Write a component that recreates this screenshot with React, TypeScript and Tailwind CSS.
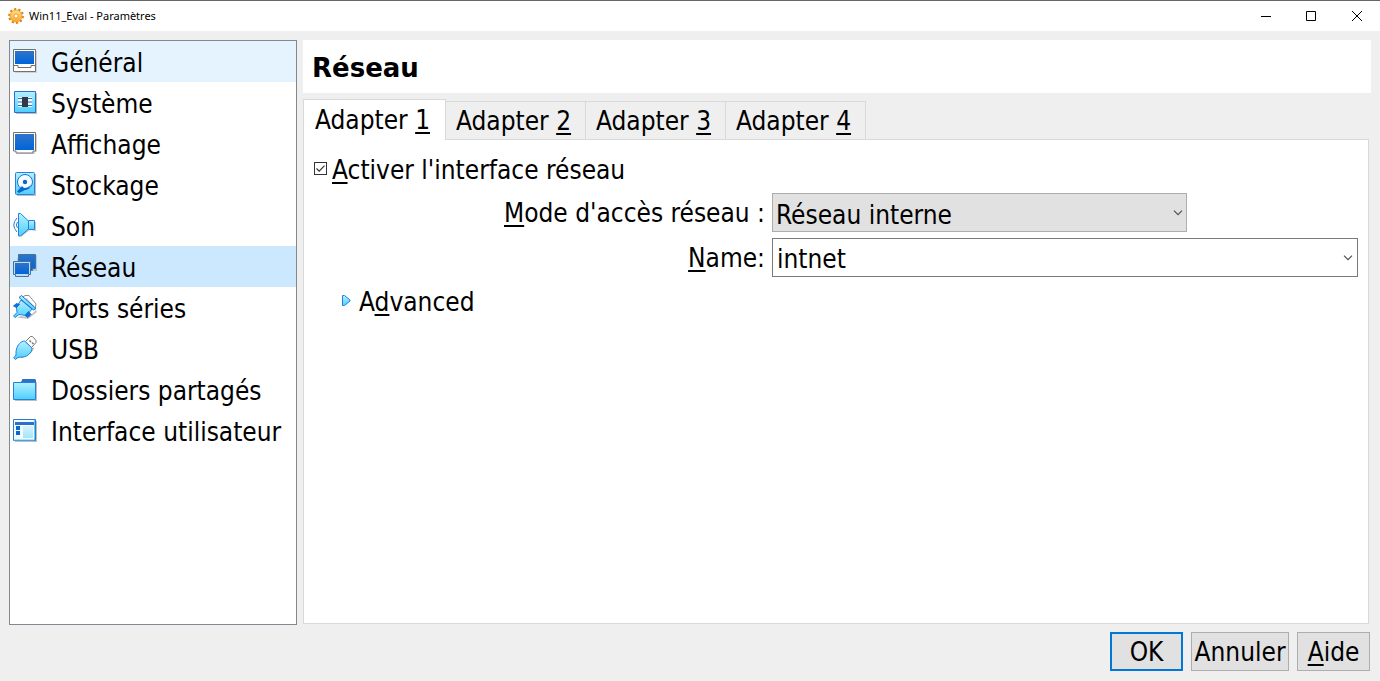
import { useState, type ReactNode } from "react";

function MonitorIcon({ tray }: { tray?: boolean }) {
  return (
    <>
      {tray ? (
        <>
          <path d="M2 2h22v22H2z" fill="#c9c9c9" opacity="0.8" />
          <path d="M.5 .5h22v22H.5z" fill="#fff" stroke="#77716e" />
          <path d="M1 16.500h4v2h13v-2h4" fill="none" stroke="#77716e" />
          <path d="M2 2h19v13H2z" fill="url(#screen)" />
        </>
      ) : (
        <>
          <path d="M2 2h22v18h-2v2H4z" fill="#c9c9c9" opacity="0.8" />
          <path d="M.5 .5h22v18.500h-2.500v2H3v-2H.5z" fill="#fff" stroke="#77716e" />
          <path d="M2 2h19v16H2z" fill="url(#screen)" />
        </>
      )}
    </>
  );
}

const icons: Record<string, ReactNode> = {
  general: <MonitorIcon tray />,
  system: (
    <>
      <path d="M3 3h21v21H3z" fill="#bdbdbd" />
      <path d="M1.500 1.500h21v21h-21z" fill="url(#aqua)" stroke="#2b6fcb" />
      <path d="M5 7h14v10H5z" fill="#f3fbff" />
      <path d="M5 8.500h14M5 12h14M5 15.500h14" stroke="#2b6fcb" strokeWidth="1.200" />
      <path d="M9 7h6v10H9z" fill="#333942" />
    </>
  ),
  display: (
    <g transform="translate(0 1)">
      <MonitorIcon />
    </g>
  ),
  storage: (
    <>
      <path d="M4 2h19v22H4z" fill="#bdbdbd" />
      <rect x="2.500" y=".5" width="19" height="22" rx="1" fill="url(#aqua)" stroke="#2b7fe0" />
      <circle cx="12" cy="10" r="7.500" fill="#f4fcff" stroke="#1673d8" />
      <circle cx="12" cy="10" r="2.200" fill="#0b66ce" />
      <path d="M18 12c-1 3.500-3 5-6 6l-6 3-2-1.500 5-5.500 2 2c3 0 5-1 7-4z" fill="#0b66ce" />
    </>
  ),
  sound: (
    <>
      <path d="M6 2l10 7h7v9l-6-1-9 7z" fill="#c5c5c5" />
      <path d="M15.500 7.500h6v9h-6z" fill="url(#aqua)" stroke="#2380df" />
      <path d="M5.500 .5h2l8 7.500v8l-8 7h-2z" fill="url(#aqua)" stroke="#2380df" />
      <path d="M4 5Q-2.500 12 4 19M4.500 9Q2 12 4.500 15" fill="none" stroke="#2380df" />
    </>
  ),
  network: (
    <>
      <path d="M6 1h18v16H9v2H4V4h2z" fill="#8aa9c4" opacity="0.5" />
      <path d="M5.500 .5h17v14h-3v2h-11v-2h-3z" fill="url(#screen)" stroke="#4a7296" />
      <path d="M.5 7.500h17v13h-2v2h-13v-2h-2z" fill="#bcdcf4" stroke="#4a7296" />
      <path d="M2 9h14v11H2z" fill="url(#screen)" />
    </>
  ),
  serial: (
    <>
      <path d="M4 23l4-2 7 1 4-3 4-4 1 2-9 7-7-1z" fill="#c2c2c2" />
      <path d="M10 2l2-1.500h4l7 8.500-1 5z" fill="#fff" stroke="#8f8f8f" />
      <path d="M13 3.500l7.500 8" stroke="#c4c4c4" strokeWidth="1.200" />
      <path d="M3.500 12L8 5l11 9-5.500 6.500-7.500-1-4 3-1.500-1.500L4 17.500z" fill="url(#aqua)" stroke="#2380df" />
      <path d="M6 2.500L8.500 .5 23 13.500l-2.500 1.500z" fill="url(#aqua)" stroke="#1670d2" />
      <path d="M.5 11l3-2.500 3 1-3 3zM12 20.500l3.500-4 2.500 3-3 3z" fill="#0b74dc" stroke="#1670d2" />
    </>
  ),
  usb: (
    <>
      <path d="M3 24c2-3 5-1 10-5 5-4 7-8 7-8l1 1c0 3-8 11-15 10z" fill="#c2c2c2" />
      <path d="M12.500 5.500l5-5h2l3.500 4v2l-5 5.500z" fill="#fff" stroke="#777" />
      <path d="M16.500 4.500l1.500 1.500M19 6.500l1.500 1.500" stroke="#777" strokeWidth="1.500" />
      <path d="M11.500 5l7.500 7c0 5-5 8.500-9 9-3 .4-5 0-6 1l-1.500 1.500-1.800-1.800L2.500 20c1-1 0-4 1-7 1-4 4.500-8 8-8z" fill="url(#aqua)" stroke="#2380df" />
    </>
  ),
  folder: (
    <>
      <path d="M2 5h22v19H2z" fill="#bdbdbd" />
      <path d="M8 5l1.500-3H22l1 1v8H8z" fill="#2d6fc9" />
      <path d="M.5 5.500h22v17H.5z" fill="url(#aqua)" stroke="#2380df" />
    </>
  ),
  ui: (
    <>
      <path d="M2 3h22v21H2z" fill="#bdbdbd" />
      <path d="M.5 1.500h22v21H.5z" fill="#f2fbff" stroke="#2b7bd0" />
      <path d="M21.500 2v20H1" fill="none" stroke="#59cdf8" />
      <path d="M2 4h19v3H2z" fill="#2d6fc9" />
      <path d="M3 8h4v4H3zM3 13h4v4H3z" fill="#0b66d4" />
      <path d="M10 8h10v12H10z" fill="url(#pale)" />
    </>
  ),
};

const categories = [
  { id: "general", label: "Général" },
  { id: "system", label: "Système" },
  { id: "display", label: "Affichage" },
  { id: "storage", label: "Stockage" },
  { id: "sound", label: "Son" },
  { id: "network", label: "Réseau" },
  { id: "serial", label: "Ports séries" },
  { id: "usb", label: "USB" },
  { id: "folder", label: "Dossiers partagés" },
  { id: "ui", label: "Interface utilisateur" },
];

function Key({ children }: { children: ReactNode }) {
  return (
    <span className="underline decoration-2 underline-offset-3 [text-decoration-skip-ink:none]">
      {children}
    </span>
  );
}

function Chevron() {
  return (
    <svg viewBox="0 0 10 6" className="h-[6px] w-[10px]" aria-hidden="true">
      <path d="M1 .7l4 4 4-4" fill="none" stroke="#505050" strokeWidth="1.200" />
    </svg>
  );
}

function GearIcon() {
  return (
    <svg viewBox="0 0 16 16" className="size-4" aria-hidden="true">
      <circle cx="8" cy="8" r="6.700" fill="none" stroke="#e07c18" strokeWidth="2.400" strokeDasharray="2.100 2.109" />
      <circle cx="8" cy="8" r="6" fill="url(#gold)" stroke="#ec9a2c" strokeWidth=".8" />
      <circle cx="8" cy="8" r="2" fill="#fffdf5" stroke="#e8912b" strokeWidth=".8" />
    </svg>
  );
}

function Gradients() {
  return (
    <svg className="absolute size-0" aria-hidden="true">
      <defs>
        <linearGradient id="screen" x1="0" y1="0" x2="0" y2="1">
          <stop offset="0" stopColor="#2d75c9" />
          <stop offset="1" stopColor="#0064da" />
        </linearGradient>
        <linearGradient id="aqua" x1="0" y1="0" x2="0" y2="1">
          <stop offset="0" stopColor="#b4f1fd" />
          <stop offset="1" stopColor="#4dcfff" />
        </linearGradient>
        <linearGradient id="pale" x1="0" y1="0" x2="0" y2="1">
          <stop offset="0" stopColor="#d8f4fd" />
          <stop offset="1" stopColor="#a4e3fa" />
        </linearGradient>
        <linearGradient id="gold" x1="0" y1="0" x2="0" y2="1">
          <stop offset="0" stopColor="#ffe07a" />
          <stop offset="1" stopColor="#fba72f" />
        </linearGradient>
      </defs>
    </svg>
  );
}

export default function App() {
  const [category, setCategory] = useState("network");
  const [adapter, setAdapter] = useState(1);
  const [enabled, setEnabled] = useState(true);
  const [network, setNetwork] = useState("intnet");

  return (
    <div className="flex min-h-screen flex-col bg-[#efefef] font-['DejaVu_Sans_Condensed','DejaVu_Sans',sans-serif] text-[26px] leading-[38px] text-black">
      <Gradients />
      <header className="flex h-[31px] items-center justify-between border-t border-[#666] bg-white pl-2">
        <div className="flex items-center gap-[5px]">
          <GearIcon />
          <h1 className="font-['Noto_Sans','Open_Sans',sans-serif] text-[11px] leading-4">Win11_Eval - Paramètres</h1>
        </div>
        <div className="flex">
          <button type="button" aria-label="Réduire" className="grid h-[30px] w-[45px] place-items-center">
            <svg viewBox="0 0 11 11" className="size-[11px]"><path d="M1 5.500h10" stroke="#000" /></svg>
          </button>
          <button type="button" aria-label="Agrandir" className="grid h-[30px] w-[46px] place-items-center">
            <svg viewBox="0 0 10 10" className="size-[10px]"><path d="M.5 .5h9v9h-9z" fill="none" stroke="#000" /></svg>
          </button>
          <button type="button" aria-label="Fermer" className="grid h-[30px] w-[46px] place-items-center">
            <svg viewBox="0 0 10 10" className="size-[10px]"><path d="M0 0l10 10M10 0L0 10" stroke="#000" /></svg>
          </button>
        </div>
      </header>

      <div className="flex grow gap-[6px] px-[9px] pt-[9px]">
        <nav className="w-[288px] shrink-0 border border-[#828790] bg-white">
          {categories.map((item) => (
            <button
              key={item.id}
              type="button"
              onClick={() => setCategory(item.id)}
              aria-current={item.id === category ? "page" : undefined}
              className={`flex h-[41px] w-full items-center gap-[13px] pl-[3px] text-left whitespace-nowrap ${
                item.id === category ? "bg-[#cce8ff]" : item.id === "general" ? "bg-[#e5f3ff]" : "hover:bg-[#e5f3ff]"
              }`}
            >
              <svg viewBox="0 0 25 25" className="size-[25px] shrink-0" aria-hidden="true">
                {icons[item.id]}
              </svg>
              <span className="pt-0.5">{item.label}</span>
            </button>
          ))}
        </nav>

        <main className="flex min-w-0 grow flex-col">
          <h2 className="h-[53px] bg-white px-[9px] font-['DejaVu_Sans',sans-serif] leading-[56px] font-bold">Réseau</h2>

          <div className="mt-[6px] mr-[2px] flex grow flex-col">
            <div role="tablist" className="flex h-[41px] items-end">
              {[1, 2, 3, 4].map((n) => (
                <button
                  key={n}
                  type="button"
                  role="tab"
                  aria-selected={n === adapter}
                  onClick={() => setAdapter(n)}
                  className={
                    n === adapter
                      ? "h-[41px] w-[143px] border border-b-0 border-[#d9d9d9] bg-white pr-1 whitespace-nowrap"
                      : "h-[39px] w-[140px] border-t border-r border-[#d9d9d9] pr-1 whitespace-nowrap"
                  }
                >
                  Adapter <Key>{n}</Key>
                </button>
              ))}
            </div>
            <section role="tabpanel" className="-mt-px flex grow flex-col">
              <div className="flex">
                <div className="w-[143px] border-l border-[#d9d9d9]" />
                <div className="h-px grow bg-[#d9d9d9]" />
              </div>
              <div className="grow border border-t-0 border-[#d9d9d9] bg-white pt-[10px] pr-[10px] pl-[10px]">
                <label className="flex items-center gap-[5px]">
                  <span className="mb-0.5 grid size-[13px] place-items-center">
                    <input
                      type="checkbox"
                      checked={enabled}
                      onChange={(e) => setEnabled(e.target.checked)}
                      className="col-start-1 row-start-1 size-[13px] appearance-none border border-[#333] bg-white"
                    />
                    {enabled && (
                      <svg viewBox="0 0 13 13" className="pointer-events-none col-start-1 row-start-1 size-[13px]" aria-hidden="true">
                        <path d="M2.500 6.500l2.700 2.700 5.300-5.500" fill="none" stroke="#333" strokeWidth="1.200" />
                      </svg>
                    )}
                  </span>
                  <span className="pt-px">
                    <Key>A</Key>ctiver l'interface réseau
                  </span>
                </label>

                <div className="mt-1 grid grid-cols-[451px_minmax(0,1fr)] gap-x-[7px] gap-y-[6px]">
                  <label htmlFor="mode" className="pt-px text-right whitespace-nowrap">
                    <Key>M</Key>ode d'accès réseau :
                  </label>
                  <div className="grid w-[415px] items-center">
                    <select
                      id="mode"
                      className="col-start-1 row-start-1 h-[39px] appearance-none border border-[#adadad] bg-[#e1e1e1] pt-0.5 pr-6 pl-[3px]"
                    >
                      <option>Réseau interne</option>
                    </select>
                    <span className="pointer-events-none col-start-1 row-start-1 mr-1 justify-self-end">
                      <Chevron />
                    </span>
                  </div>

                  <label htmlFor="name" className="pt-px text-right">
                    <Key>N</Key>ame:
                  </label>
                  <div className="flex h-[39px] border border-[#7a7a7a]">
                    <input
                      id="name"
                      type="text"
                      value={network}
                      onChange={(e) => setNetwork(e.target.value)}
                      className="min-w-0 grow pt-0.5 pl-1 outline-none"
                    />
                    <button type="button" aria-label="Afficher la liste" className="grid w-[18px] place-items-center">
                      <Chevron />
                    </button>
                  </div>
                </div>

                <button type="button" className="mt-[6px] ml-7 flex items-center gap-2">
                  <svg viewBox="0 0 9 11" className="mb-1 h-[11px] w-[9px]" aria-hidden="true">
                    <path d="M.5 .5h2l5.500 4.500v1L2.500 10.500h-2z" fill="url(#aqua)" stroke="#2380df" />
                  </svg>
                  <span>
                    A<Key>d</Key>vanced
                  </span>
                </button>
              </div>
            </section>
          </div>
          <div className="h-px" />
        </main>
      </div>

      <footer className="flex justify-end gap-2 px-[10px] pt-[7px] pb-[10px]">
        <button type="button" className="h-[39px] w-[73px] border-2 border-[#0078d7] bg-[#e1e1e1] pt-0.5 leading-[33px]">OK</button>
        <button type="button" className="h-[39px] w-[98px] border border-[#adadad] bg-[#e1e1e1] pt-0.5 leading-[35px] whitespace-nowrap">Annuler</button>
        <button type="button" className="h-[39px] w-[73px] border border-[#adadad] bg-[#e1e1e1] pt-0.5 leading-[35px]">
          <Key>A</Key>ide
        </button>
      </footer>
    </div>
  );
}
